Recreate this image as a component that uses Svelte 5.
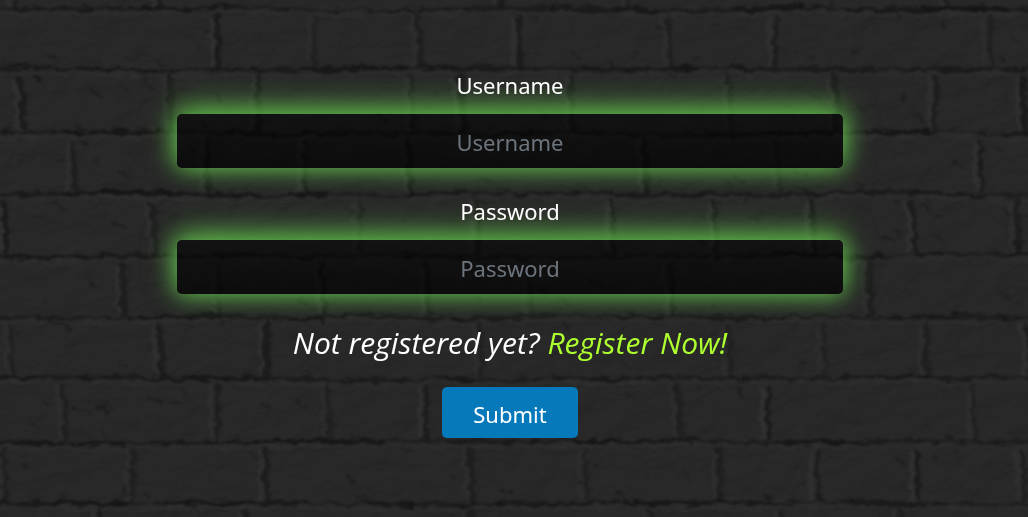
<script>
  let username = $state('');
  let password = $state('');

  // Each course of the wall: its top edge, its bottom edge and the upright joints in it.
  const courses = [
    { top: -50, bottom: 9, joints: [12, 160, 500, 628, 832, 944] },
    { top: 9, bottom: 69, joints: [217, 315, 417, 519, 668, 776, 989] },
    { top: 69, bottom: 133, joints: [20, 169, 259, 411, 460, 572, 728, 834, 937, 1024] },
    { top: 133, bottom: 194, joints: [74, 208, 306, 408, 644, 776, 980] },
    { top: 194, bottom: 256, joints: [4, 152, 361, 477, 612, 714, 811, 911, 1016] },
    { top: 256, bottom: 317, joints: [123, 220, 322, 426, 528, 671, 870] },
    { top: 317, bottom: 378, joints: [9, 159, 267, 480, 728, 825, 927, 1026] },
    { top: 378, bottom: 442, joints: [63, 217, 327, 427, 677, 769, 973] },
    { top: 442, bottom: 503, joints: [3, 134, 267, 470, 585, 719, 818, 918, 1020] },
    { top: 503, bottom: 570, joints: [100, 245, 470, 650, 782, 900] }
  ];

  let seed = 11;
  function rand() {
    seed = (seed * 16807) % 2147483647;
    return seed / 2147483647;
  }
  // A bed joint is a row of short strokes, so that its depth changes along the wall.
  function bed(y) {
    const strokes = [];
    let x = -10;
    let level = y;
    while (x < 1040) {
      const length = 25 + rand() * 60;
      const next = y + Math.round(rand() * 4 - 2);
      strokes.push({
        d: `M${x} ${level} L${x + length} ${next}`,
        width: 2 + rand() * 3,
        opacity: 0.55 + rand() * 0.4
      });
      x += length;
      level = next;
    }
    return strokes;
  }
  function upright(x, top, bottom) {
    const lean = Math.round(rand() * 6 - 1);
    return {
      d: `M${x} ${top + 8} L${x + lean - 1} ${(top + bottom) / 2} L${x + lean} ${bottom - 3}`,
      width: 3 + rand() * 4,
      opacity: 0.35 + rand() * 0.35
    };
  }
  const beds = courses.flatMap((c) => bed(c.bottom));
  const uprights = courses.flatMap((c) => c.joints.map((x) => upright(x, c.top, c.bottom)));
  const chips = Array.from({ length: 220 }, () => {
    const x = Math.round(rand() * 1028);
    const y = Math.round(rand() * 517);
    return {
      d: `M${x} ${y} q${Math.round(2 + rand() * 4)} ${Math.round(rand() * 3)} ${Math.round(4 + rand() * 9)} ${Math.round(2 + rand() * 6)}`,
      opacity: 0.2 + rand() * 0.5
    };
  });
</script>

<svg class="wall" viewBox="0 0 1028 517" preserveAspectRatio="xMidYMid slice" aria-hidden="true">
  <defs>
    <filter id="rough" x="-5%" y="-5%" width="110%" height="110%" color-interpolation-filters="sRGB">
      <feTurbulence type="fractalNoise" baseFrequency="0.07 0.13" numOctaves="4" seed="4" result="n" />
      <feDisplacementMap in="SourceGraphic" in2="n" scale="10" xChannelSelector="R" yChannelSelector="G" />
      <feGaussianBlur stdDeviation="0.9" />
    </filter>
    <filter id="plaster" x="0" y="0" width="100%" height="100%" color-interpolation-filters="sRGB">
      <feTurbulence type="fractalNoise" baseFrequency="0.03 0.045" numOctaves="5" seed="9" result="n" />
      <feColorMatrix in="n" type="matrix" values="0 0 0 0 0  0 0 0 0 0  0 0 0 0 0  1 0 0 0 0" />
      <feDiffuseLighting surfaceScale="2" diffuseConstant="0.174" lighting-color="#ffffff">
        <feDistantLight azimuth="235" elevation="66" />
      </feDiffuseLighting>
    </filter>
  </defs>
  <rect width="1028" height="517" fill="#282828" />
  <rect width="1028" height="517" filter="url(#plaster)" opacity="0.65" />
  <g filter="url(#rough)" fill="none">
    <g transform="translate(0 5)" stroke="#303030">
      {#each beds as b}<path d={b.d} stroke-width="3" stroke-opacity={b.opacity * 0.8} />{/each}
    </g>
    <g transform="translate(-6 0)" stroke="#343434">
      {#each uprights as u}<path d={u.d} stroke-width="5" stroke-opacity={u.opacity} />{/each}
    </g>
    <g stroke="#151515" stroke-linecap="round">
      {#each beds as b}<path d={b.d} stroke-width={b.width} stroke-opacity={b.opacity} />{/each}
      {#each uprights as u}<path d={u.d} stroke-width={u.width} stroke-opacity={u.opacity} />{/each}
    </g>
    <g stroke="#141414" stroke-width="2">
      {#each chips as c}<path d={c.d} stroke-opacity={c.opacity} />{/each}
    </g>
  </g>
</svg>

<main>
  <form onsubmit={(e) => e.preventDefault()}>
    <div class="field">
      <label for="username">Username</label>
      <input id="username" type="text" placeholder="Username" bind:value={username} />
    </div>
    <div class="field">
      <label for="password">Password</label>
      <input id="password" type="password" placeholder="Password" bind:value={password} />
    </div>
    <p>Not registered yet? <a href="#register">Register Now!</a></p>
    <button type="submit">Submit</button>
  </form>
</main>

<style>
  :global(body) {
    margin: 0;
    background: #282828;
  }
  .wall {
    position: fixed;
    inset: 0;
    z-index: -1;
    width: 100%;
    height: 100%;
  }
  main {
    padding: 68px 8px 24px 0;
    font-family: 'Segoe UI', 'Noto Sans', sans-serif;
    font-size: 22px;
    line-height: 36px;
    color: #fff;
  }
  form {
    display: flex;
    flex-direction: column;
    align-items: center;
    width: 66%;
    max-width: 666px;
    margin: 0 auto;
  }
  .field {
    display: flex;
    flex-direction: column;
    gap: 12px;
    width: 100%;
    margin-bottom: 26px;
    text-align: center;
  }
  label {
    position: relative;
    z-index: 1;
    line-height: 34px;
  }
  input {
    box-sizing: border-box;
    width: 100%;
    height: 54px;
    padding: 10px 16px 8px;
    border: 0;
    border-radius: 5px;
    outline: 0;
    background: linear-gradient(rgba(0, 0, 0, 0.52), rgba(0, 0, 0, 0.68));
    box-shadow:
      0 0 22px 1px rgba(100, 195, 78, 0.9),
      0 -8px 32px rgba(100, 195, 78, 0.62);
    color: #fff;
    font: inherit;
    text-align: center;
  }
  input::placeholder {
    color: #6c757d;
    opacity: 1;
  }
  p {
    margin: 0 0 22px;
    font-family: 'Segoe UI', 'Open Sans', sans-serif;
    font-size: 30px;
    font-style: italic;
    line-height: 45px;
    text-align: center;
  }
  a {
    color: #adff2f;
    text-decoration: none;
  }
  button {
    min-width: 136px;
    padding: 9px 30px 6px;
    border: 0;
    border-radius: 5px;
    background: #0679ba;
    color: #fff;
    font: inherit;
    cursor: pointer;
  }
</style>
